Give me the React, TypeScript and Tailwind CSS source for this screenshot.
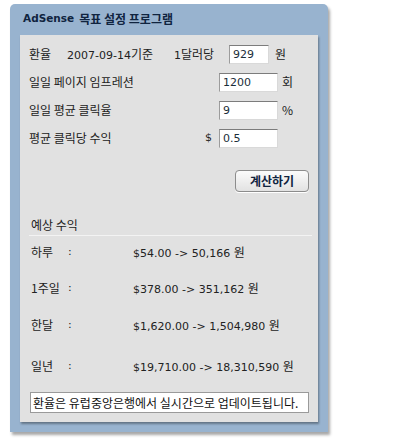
import React from 'react';

const body = { fontFamily: '"DejaVu Sans", "Noto Sans CJK KR", sans-serif' };
const kr = { fontFamily: '"Noto Sans CJK KR", "DejaVu Sans", sans-serif' };

const inputCls =
  'h-[19px] bg-white border border-t-[#7c7c7c] border-l-[#9c9c9c] border-r-[#d9d9d9] border-b-[#d9d9d9] pl-[3px] text-[11px] leading-[17px] text-[#1b2e3a] outline-none';

const fields = [
  { label: '일일 페이지 임프레션', value: '1200', unit: '회', prefix: '' },
  { label: '일일 평균 클릭율', value: '9', unit: '%', prefix: '' },
  { label: '평균 클릭당 수익', value: '0.5', unit: '', prefix: '$' },
];

const results = [
  { label: '하루', value: '$54.00 -> 50,166', gap: 'mt-[8px]' },
  { label: '1주일', value: '$378.00 -> 351,162', gap: 'mt-[20px]' },
  { label: '한달', value: '$1,620.00 -> 1,504,980', gap: 'mt-[21px]' },
  { label: '일년', value: '$19,710.00 -> 18,310,590', gap: 'mt-[25px]' },
];

const K = ({ children }: { children: React.ReactNode }) => (
  <span className="text-[12px]" style={kr}>
    {children}
  </span>
);

export default function App() {
  return (
    <div className="w-[396px] h-[443px] bg-white overflow-hidden text-[#222]" style={body}>
      <div className="ml-[10px] mt-[4px] w-[318px] rounded-t-[5px] bg-[#98b3cf] px-[10px] pb-[10px] shadow-[2px_3px_3px_rgba(0,0,0,0.35)]">
        {/* title */}
        <div className="h-[31px] flex items-center pl-[3px] pb-[1px] font-bold text-[#10243f]">
          <span className="text-[10.5px]">AdSense</span>
          <span className="ml-[5px] text-[12px]" style={kr}>
            목표 설정 프로그램
          </span>
        </div>

        <div className="bg-[#e1e1e1] px-[9px] pt-[10px] pb-[9px] shadow-[1px_2px_2px_rgba(0,0,0,0.35)] text-[11px]">
          {/* exchange rate row */}
          <div className="flex items-center h-[19px]">
            <span className="w-[38px]">
              <K>환율</K>
            </span>
            <span className="w-[107px]">
              2007-09-14<K>기준</K>
            </span>
            <span className="w-[55px]">
              1<K>달러당</K>
            </span>
            <input className={`${inputCls} w-[40px]`} defaultValue="929" style={body} />
            <span className="ml-[6px]">
              <K>원</K>
            </span>
          </div>

          {fields.map((f) => (
            <div key={f.label} className="flex items-center h-[19px] mt-[9px]">
              <span className="w-[176px]">
                <K>{f.label}</K>
              </span>
              <span className="w-[14px]">{f.prefix}</span>
              <input className={`${inputCls} w-[59px]`} defaultValue={f.value} style={body} />
              <span className="ml-[4px]">
                <K>{f.unit}</K>
              </span>
            </div>
          ))}

          <div className="flex justify-end mt-[22px]">
            <button
              className="w-[74px] h-[22px] rounded-[4px] border border-[#8c8c8c] bg-gradient-to-b from-[#fbfbfb] to-[#e2e2e2] text-[12px] font-bold text-[#10243f] shadow-[0_1px_0_#ffffff]"
              style={kr}
            >
              계산하기
            </button>
          </div>

          <div className="mt-[25px] h-[16px] leading-[16px] pl-[2px]">
            <K>예상 수익</K>
          </div>
          <div className="mt-[2px] h-px -mr-[3px] bg-[#cdcdcd] border-b border-[#f3f3f3]" />

          {results.map((r) => (
            <div key={r.label} className={`flex h-[16px] leading-[16px] pl-[2px] ${r.gap}`}>
              <span className="w-[37px]">
                <K>{r.label}</K>
              </span>
              <span className="w-[65px]">:</span>
              <span>
                {r.value} <K>원</K>
              </span>
            </div>
          ))}

          <div className="mt-[18px] ml-[1px] h-[21px] bg-white border border-[#9a9a9a] pl-[2px] leading-[19px] text-[#111]">
            <K>환율은 유럽중앙은행에서 실시간으로 업데이트됩니다.</K>
          </div>
        </div>
      </div>
    </div>
  );
}
